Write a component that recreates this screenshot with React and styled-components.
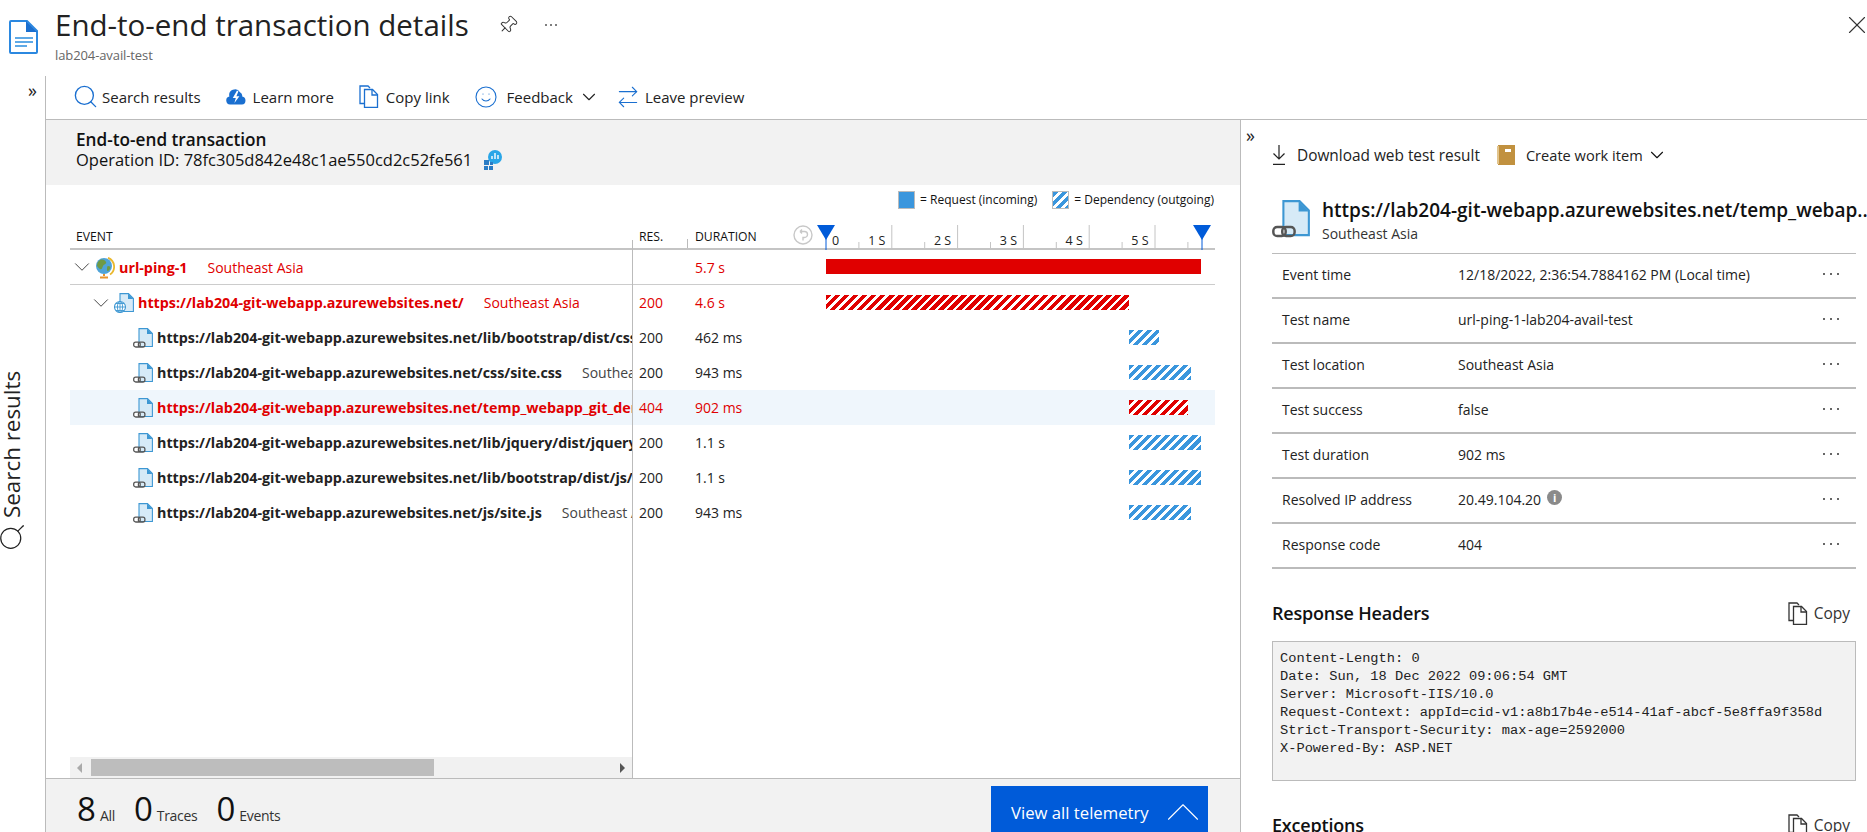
import React from "react";
import styled, { createGlobalStyle } from "styled-components";
import { Search, ChevronDown, ChevronUp, Smile, ArrowRightLeft, Pin, X } from "lucide-react";

const GlobalStyle = createGlobalStyle`
  html, body { margin: 0; padding: 0; height: 100%; background: #fff; overflow: hidden; }
  * { box-sizing: border-box; }
  body { font-family: "Open Sans", "Noto Sans", sans-serif; color: #111; font-size: 14px; }
`;

const PX_PER_SEC = 65.8;
const RED = "#e00000";
const BLUE = "#3a96dd";

const Page = styled.div`
  width: 1867px;
  height: 832px;
  display: flex;
  flex-direction: column;
  overflow: hidden;
`;

const Header = styled.header`
  height: 76px;
  flex: none;
  display: flex;
  padding: 9px 0 0 9px;
  position: relative;
`;

const HeaderIcon = styled.div`
  width: 29px;
  margin: 11px 17px 0 0;
`;

const TitleRow = styled.div`
  display: flex;
  align-items: center;
  height: 32px;
`;

const Title = styled.h1`
  margin: 0;
  font-size: 29.5px;
  line-height: 32px;
  font-weight: 400;
  color: #222;
`;

const Subtitle = styled.div`
  font-size: 13px;
  line-height: 18px;
  color: #666;
  margin-top: 5px;
  letter-spacing: -0.1px;
`;

const PinButton = styled.span`
  display: flex;
  margin-left: 29px;
  color: #333;
  transform: rotate(45deg);
`;

const MoreButton = styled.span`
  display: flex;
  margin-left: 26px;
  color: #555;
`;

const CloseButton = styled.span`
  position: absolute;
  right: -5px;
  top: 10px;
  display: flex;
  color: #333;
`;

const Body = styled.div`
  flex: 1;
  min-height: 0;
  display: flex;
`;

const Rail = styled.aside`
  width: 46px;
  flex: none;
  border-right: 1px solid #bbb;
  display: flex;
  flex-direction: column;
`;

const Expand = styled.span`
  font-size: 18px;
  line-height: 18px;
  color: #222;
  margin: 5px 8px 0 0;
  align-self: flex-end;
`;

const RailLabel = styled.div`
  display: flex;
  align-items: center;
  gap: 4px;
  writing-mode: vertical-rl;
  transform: rotate(180deg);
  font-size: 22.4px;
  line-height: 24px;
  height: 190px;
  width: 24px;
  margin: 263px 0 0 0;
  color: #222;
  white-space: nowrap;
`;

const RailSearch = styled(Search)`
  transform: rotate(90deg);
  flex: none;
`;

const Content = styled.div`
  flex: 1;
  min-width: 0;
  display: flex;
  flex-direction: column;
`;

const Toolbar = styled.nav`
  height: 44px;
  flex: none;
  display: flex;
  align-items: center;
  padding: 0 0 2px 29px;
  border-bottom: 1px solid #bbb;
`;

const ToolItem = styled.span`
  display: flex;
  align-items: center;
  gap: ${(p) => p.$gap || 6}px;
  margin-right: ${(p) => p.$right ?? 25}px;
  font-size: ${(p) => p.$size || 15}px;
  white-space: nowrap;
  color: #222;
`;

const ToolSearch = styled(Search)`
  margin: -3px;
`;

const ToolSmile = styled(Smile)`
  margin: -2px;
`;

const ToolSwap = styled(ArrowRightLeft)`
  margin: -3px;
`;

const Split = styled.div`
  flex: 1;
  min-height: 0;
  display: flex;
`;

const Main = styled.main`
  width: 1194px;
  flex: none;
  display: flex;
  flex-direction: column;
`;

const Summary = styled.section`
  height: 65px;
  flex: none;
  background: #f2f2f2;
  padding: 10px 30px 0;
  line-height: 20px;
`;

const SummaryTitle = styled.div`
  font-weight: 600;
  font-size: 17.2px;
`;

const OperationRow = styled.div`
  display: flex;
  align-items: center;
  gap: 11px;
  font-size: 16.5px;
`;

const Legend = styled.div`
  height: 40px;
  flex: none;
  display: flex;
  align-items: flex-end;
  justify-content: flex-end;
  padding: 0 26px 16px 0;
  font-size: 12px;
  gap: 15px;
`;

const LegendItem = styled.span`
  display: flex;
  align-items: center;
  gap: 5px;
  line-height: 18px;
`;

const hatch = (color) =>
  `repeating-linear-gradient(135deg, ${color} 0 4px, #fff 4px 6.4px)`;

const Swatch = styled.span`
  width: 17px;
  height: 18px;
  border: 1px solid #bbb;
  background: ${(p) => (p.$hatched ? hatch(BLUE) : BLUE)};
`;

const TableArea = styled.div`
  flex: 1;
  min-height: 0;
  margin: 0 25px 0 24px;
  display: flex;
  flex-direction: column;
  position: relative;
`;

const ColumnLine = styled.span`
  position: absolute;
  left: 562px;
  top: 15px;
  bottom: 0;
  width: 1px;
  background: #bbb;
`;

const HeaderRow = styled.div`
  height: 25px;
  flex: none;
  display: flex;
  font-size: 12.2px;
  line-height: 23px;
  border-bottom: 2px solid #c4c4c4;
  position: relative;
`;

const HeadEvent = styled.span`
  width: 562px;
  padding-left: 6px;
`;

const HeadRes = styled.span`
  width: 56px;
  padding-left: 7px;
`;

const HeadDuration = styled.span`
  width: 128px;
  padding: 0 3px 0 7px;
  display: flex;
  justify-content: space-between;
  position: relative;
  &::before {
    content: "";
    position: absolute;
    left: -1px;
    bottom: 0;
    height: 9px;
    width: 1px;
    background: #bbb;
  }
`;

const HelpIcon = styled.svg`
  width: 20px;
  height: 20px;
`;

const Axis = styled.svg`
  flex: 1;
  height: 25px;
  overflow: visible;
`;

const Rows = styled.div`
  flex: 1;
  min-height: 0;
`;

const Row = styled.div`
  height: 35px;
  display: flex;
  align-items: center;
  background: ${(p) => (p.$selected ? "#eff6fc" : "transparent")};
  border-bottom: ${(p) => (p.$ruled ? "1px solid #ccc" : "none")};
  color: ${(p) => (p.$error ? RED : "#222")};
`;

const EventCell = styled.div`
  width: 562px;
  flex: none;
  display: flex;
  align-items: center;
  overflow: hidden;
  white-space: nowrap;
  padding-left: ${(p) => 6 + p.$level * 19}px;
`;

const Twisty = styled.span`
  width: 19px;
  flex: none;
  display: flex;
  color: #444;
`;

const TwistyChevron = styled(ChevronDown)`
  flex: none;
  margin: 0 -7px;
`;

const RowIcon = styled.span`
  width: 20px;
  height: 20px;
  flex: none;
  margin-right: 4px;
  display: flex;
`;

const EventName = styled.span`
  font-weight: 700;
  font-size: 14.3px;
  flex: none;
`;

const Location = styled.span`
  margin-left: 20px;
  flex: none;
  font-size: 14px;
  color: ${(p) => (p.$error ? RED : "#444")};
`;

const ResCell = styled.span`
  width: 56px;
  flex: none;
  padding-left: 7px;
`;

const DurationCell = styled.span`
  width: 138px;
  flex: none;
  padding-left: 7px;
`;

const Track = styled.div`
  flex: 1;
  height: 15px;
  margin-top: -1px;
`;

const Bar = styled.div`
  height: 15px;
  background: ${(p) => {
    const color = p.$error ? RED : BLUE;
    return p.$hatched ? hatch(color) : color;
  }};
`;

const ScrollBar = styled.div`
  height: 21px;
  flex: none;
  width: 562px;
  background: #f1f1f1;
  display: flex;
  align-items: center;
  justify-content: space-between;
  padding: 0 7px;
  position: relative;
`;

const ScrollThumb = styled.span`
  position: absolute;
  left: 21px;
  top: 2px;
  width: 343px;
  height: 17px;
  background: #bdbdbd;
`;

const Arrow = styled.span`
  width: 0;
  height: 0;
  border-top: 5px solid transparent;
  border-bottom: 5px solid transparent;
  ${(p) => (p.$left ? "border-right: 5px solid #aaa;" : "border-left: 5px solid #555;")}
`;

const Footer = styled.footer`
  height: 54px;
  flex: none;
  overflow: hidden;
  border-top: 1px solid #bbb;
  background: #f2f2f2;
  display: flex;
  justify-content: space-between;
  padding: 7px 32px 0 31px;
`;

const Stats = styled.div`
  display: flex;
  gap: 19px;
  align-items: baseline;
  padding-top: 2px;
`;

const Stat = styled.span`
  display: flex;
  align-items: baseline;
  gap: 4px;
  font-size: 14px;
  letter-spacing: -0.3px;
  color: #333;
  b {
    font-weight: 400;
    font-size: 33px;
    line-height: 42px;
    letter-spacing: 0;
    color: #111;
  }
`;

const ViewAll = styled.button`
  width: 217px;
  height: 52px;
  flex: none;
  border: none;
  background: #005bd9;
  color: #fff;
  font: inherit;
  font-size: 16.7px;
  display: flex;
  align-items: center;
  justify-content: space-between;
  padding: 0 0 0 20px;
`;

const ViewAllChevron = styled(ChevronUp)`
  flex: none;
  margin-right: -4px;
`;

const Panel = styled.aside`
  flex: 1;
  min-width: 0;
  border-left: 1px solid #bbb;
  padding: 0 11px 0 31px;
  position: relative;
  overflow: hidden;
`;

const PanelExpand = styled.span`
  position: absolute;
  left: 5px;
  top: 6px;
  font-size: 18px;
  line-height: 18px;
  color: #222;
`;

const PanelActions = styled.div`
  display: flex;
  align-items: center;
  height: 40px;
  margin-top: 15px;
`;

const ResultHead = styled.div`
  display: flex;
  gap: 12px;
  margin-top: 25px;
  height: 54px;
  border-bottom: 1px solid #bbb;
`;

const ResultIcon = styled.span`
  width: 38px;
  flex: none;
`;

const ResultText = styled.div`
  min-width: 0;
`;

const ResultTitle = styled.div`
  font-size: 19px;
  font-weight: 600;
  line-height: 24px;
  white-space: nowrap;
  margin-top: -2px;
`;

const ResultSub = styled.div`
  font-size: 14px;
  line-height: 20px;
  margin-top: 2px;
  color: #333;
`;

const InfoRow = styled.div`
  height: 45px;
  display: grid;
  grid-template-columns: 176px 1fr auto;
  align-items: center;
  padding: 0 16px 3px 10px;
  border-bottom: 2px solid #bbb;
  font-size: 14px;
  color: #222;
`;

const InfoValue = styled.span`
  display: flex;
  align-items: center;
  gap: 6px;
`;

const InfoDot = styled.span`
  width: 15px;
  height: 15px;
  border-radius: 50%;
  background: #8a8a8a;
  color: #fff;
  font-size: 11px;
  font-weight: 700;
  line-height: 15px;
  text-align: center;
  margin-top: -4px;
`;

const SectionHead = styled.div`
  display: flex;
  align-items: center;
  justify-content: space-between;
  height: 30px;
  margin-top: 29px;
`;

const SectionTitle = styled.h2`
  margin: 0;
  font-size: 18px;
  font-weight: 600;
  letter-spacing: -0.2px;
`;

const CopyLink = styled.span`
  display: flex;
  align-items: center;
  gap: 6px;
  padding-right: 6px;
  font-size: 15.5px;
  color: #333;
`;

const CodeBox = styled.pre`
  margin: 13px 0 0;
  height: 140px;
  background: #f2f2f2;
  border: 1px solid #bbb;
  padding: 8px 7px;
  font-family: "Liberation Mono", monospace;
  font-size: 13.7px;
  line-height: 18px;
  color: #222;
  overflow: hidden;
`;

const Dots = ({ color = "#333", step = 7 }) => (
  <svg width={step * 2 + 4} height="4" viewBox={`0 0 ${step * 2 + 4} 4`}>
    <circle cx="2" cy="2" r="1" fill={color} />
    <circle cx={2 + step} cy="2" r="1" fill={color} />
    <circle cx={2 + step * 2} cy="2" r="1" fill={color} />
  </svg>
);

const DocIcon = () => (
  <svg width="29" height="34" viewBox="0 0 29 34">
    <path d="M1 2a1 1 0 0 1 1-1h16l10 10v21a1 1 0 0 1-1 1H2a1 1 0 0 1-1-1z" fill="#fff" stroke="#2b88e0" strokeWidth="2" />
    <path d="M17 1l11 11H17z" fill="#1a6fd0" />
    <path d="M6 18h18M6 22h18M6 26h12" stroke="#5ea9e6" strokeWidth="2" />
  </svg>
);

const CloudIcon = () => (
  <svg width="20" height="16" viewBox="0 0 20 16">
    <path d="M4 15.5a4 4 0 0 1-.6-7.9A5.8 5.8 0 0 1 14 3.2a4.2 4.2 0 0 1 2.2 4.4A4 4 0 0 1 16 15.5z" fill="#1a6fd0" />
    <path d="M11 1.5L6.8 9h3L8.4 14l5-6.8h-3l2-5z" fill="#fff" />
  </svg>
);

const CopyIcon = ({ color }) => (
  <svg width="20" height="23" viewBox="0 0 20 23" fill="none" stroke={color} strokeWidth="1.3">
    <path d="M5.5 18.5H1V1h8l2 2" />
    <path d="M5.5 4.5h8l5 5v13h-13z" />
    <path d="M13 4.5v5.5h5.5" />
  </svg>
);

const InsightIcon = () => (
  <svg width="20" height="20" viewBox="0 0 20 20">
    <circle cx="12" cy="7" r="7" fill="#29a6e8" />
    <path d="M9 9V6M12 9V3M15 9V5" stroke="#fff" strokeWidth="1.4" />
    <path d="M1 10h5v5H1zM7 12h3v3H7zM1 16h4v4H1zM6 16h4v4H6z" fill="#2b7cc4" />
  </svg>
);

const GlobeIcon = () => (
  <svg width="20" height="22" viewBox="0 0 20 22">
    <path d="M13 .8a9.5 9.5 0 0 1 2 16.7" fill="none" stroke="#eab82e" strokeWidth="1.8" />
    <circle cx="9" cy="9" r="8" fill="#4fa3d8" />
    <path d="M5 3c3-1 5 0 6 2s-2 2-3 4-1 4-3 3-3-3-3-4 1-4 3-5zM13 9c2 0 3 1 2 3s-3 3-3 1 0-4 1-4z" fill="#6f9a45" />
    <path d="M9 17v2M5 20.5h8" stroke="#e8942c" strokeWidth="2" />
  </svg>
);

const FileLink = ({ scale = 1 }) => (
  <svg width={20 * scale} height={20 * scale} viewBox="0 0 20 20">
    <path d="M6 .6h8.5L19.4 5.5v13H6z" fill="#d6eaf7" stroke="#3d97d3" strokeWidth="1.1" />
    <path d="M14 .6l5.4 5.4H14z" fill="#3d97d3" />
    <rect x="0.7" y="14.2" width="6.5" height="4.8" rx="2" fill="#fff" stroke="#555" strokeWidth="1.3" />
    <rect x="5.4" y="14.2" width="6.5" height="4.8" rx="2" fill="none" stroke="#555" strokeWidth="1.3" />
  </svg>
);

const FileGlobe = () => (
  <svg width="20" height="20" viewBox="0 0 20 20">
    <path d="M6 .6h8.5L19.4 5.5v13H6z" fill="#d6eaf7" stroke="#3d97d3" strokeWidth="1.1" />
    <path d="M14 .6l5.4 5.4H14z" fill="#3d97d3" />
    <circle cx="6" cy="14" r="5.5" fill="#fff" stroke="#3d97d3" strokeWidth="1.1" />
    <path d="M.5 14h11M6 8.5v11M2 10.5h8M2 17.5h8" stroke="#3d97d3" strokeWidth="0.9" />
    <ellipse cx="6" cy="14" rx="2.6" ry="5.5" fill="none" stroke="#3d97d3" strokeWidth="0.9" />
  </svg>
);

const BookIcon = () => (
  <svg width="18" height="20" viewBox="0 0 18 20">
    <rect x="1" y="0" width="17" height="20" fill="#c1913f" />
    <rect x="0" y="1" width="2" height="18" fill="#e2c48c" />
    <rect x="8" y="4" width="6" height="3" fill="#fff" />
  </svg>
);

const DownloadIcon = () => (
  <svg width="14" height="20" viewBox="0 0 14 20" fill="none" stroke="#222" strokeWidth="1.2">
    <path d="M7 0v14M1.5 8.5L7 14l5.5-5.5M1 19.4h12" />
  </svg>
);

const AXIS_ZERO = 10;
const ticks = Array.from({ length: 12 }, (_, i) => i * 0.5);

const TimeAxis = () => (
  <Axis viewBox="0 0 399 25" preserveAspectRatio="xMinYMin">
    {ticks.map((t) => {
      const major = t % 1 === 0;
      const x = AXIS_ZERO + t * PX_PER_SEC;
      return t === 0 ? null : (
        <line key={t} x1={x} x2={x} y1={major ? 0 : 17} y2={25} stroke="#c4c4c4" strokeWidth="1" />
      );
    })}
    <text x={16} y={20} fontSize="12.5" fill="#222">0</text>
    {[1, 2, 3, 4, 5].map((n) => (
      <text key={n} x={AXIS_ZERO + n * PX_PER_SEC - 15} y={20} fontSize="12.5" textAnchor="middle" fill="#222">
        {n} S
      </text>
    ))}
    <path d="M1 0h18l-9 15z" fill="#005bd9" />
    <path d="M10 10v15" stroke="#005bd9" strokeWidth="1" />
    <path d="M377 0h18l-9 15z" fill="#005bd9" />
    <path d="M386 10v15" stroke="#005bd9" strokeWidth="1" />
  </Axis>
);

const rows = [
  { level: 0, twisty: true, icon: <GlobeIcon />, name: "url-ping-1", location: "Southeast Asia", res: "", duration: "5.7 s", start: 0, secs: 5.7, error: true, solid: true, ruled: true },
  { level: 1, twisty: true, icon: <FileGlobe />, name: "https://lab204-git-webapp.azurewebsites.net/", location: "Southeast Asia", res: "200", duration: "4.6 s", start: 0, secs: 4.6, error: true },
  { level: 2, icon: <FileLink />, name: "https://lab204-git-webapp.azurewebsites.net/lib/bootstrap/dist/css/bootstrap.min.css", location: "Southeast Asia", res: "200", duration: "462 ms", start: 4.6, secs: 0.462 },
  { level: 2, icon: <FileLink />, name: "https://lab204-git-webapp.azurewebsites.net/css/site.css", location: "Southeast Asia", res: "200", duration: "943 ms", start: 4.6, secs: 0.943 },
  { level: 2, icon: <FileLink />, name: "https://lab204-git-webapp.azurewebsites.net/temp_webapp_git_demo.html", location: "Southeast Asia", res: "404", duration: "902 ms", start: 4.6, secs: 0.902, error: true, selected: true },
  { level: 2, icon: <FileLink />, name: "https://lab204-git-webapp.azurewebsites.net/lib/jquery/dist/jquery.min.js", location: "Southeast Asia", res: "200", duration: "1.1 s", start: 4.6, secs: 1.1 },
  { level: 2, icon: <FileLink />, name: "https://lab204-git-webapp.azurewebsites.net/lib/bootstrap/dist/js/bootstrap.min.js", location: "Southeast Asia", res: "200", duration: "1.1 s", start: 4.6, secs: 1.1 },
  { level: 2, icon: <FileLink />, name: "https://lab204-git-webapp.azurewebsites.net/js/site.js", location: "Southeast Asia", res: "200", duration: "943 ms", start: 4.6, secs: 0.943 },
];

const details = [
  ["Event time", "12/18/2022, 2:36:54.7884162 PM (Local time)"],
  ["Test name", "url-ping-1-lab204-avail-test"],
  ["Test location", "Southeast Asia"],
  ["Test success", "false"],
  ["Test duration", "902 ms"],
  ["Resolved IP address", "20.49.104.20", true],
  ["Response code", "404"],
];

const headers = `Content-Length: 0
Date: Sun, 18 Dec 2022 09:06:54 GMT
Server: Microsoft-IIS/10.0
Request-Context: appId=cid-v1:a8b17b4e-e514-41af-abcf-5e8ffa9f358d
Strict-Transport-Security: max-age=2592000
X-Powered-By: ASP.NET`;

export default function App() {
  return (
    <Page>
      <GlobalStyle />
      <Header>
        <HeaderIcon><DocIcon /></HeaderIcon>
        <div>
          <TitleRow>
            <Title>End-to-end transaction details</Title>
            <PinButton><Pin size={20} strokeWidth={1.2} /></PinButton>
            <MoreButton><Dots color="#555" step={5} /></MoreButton>
          </TitleRow>
          <Subtitle>lab204-avail-test</Subtitle>
        </div>
        <CloseButton><X size={30} strokeWidth={0.9} /></CloseButton>
      </Header>
      <Body>
        <Rail>
          <Expand>»</Expand>
          <RailLabel>
            <RailSearch size={30} strokeWidth={1} />
            Search results
          </RailLabel>
        </Rail>
        <Content>
          <Toolbar>
            <ToolItem $right={25}><ToolSearch size={27} color="#1a6fd0" strokeWidth={1.2} />Search results</ToolItem>
            <ToolItem $gap={7} $right={25}><CloudIcon />Learn more</ToolItem>
            <ToolItem $gap={7} $right={26}><CopyIcon color="#1a6fd0" />Copy link</ToolItem>
            <ToolItem $gap={11} $right={5}><ToolSmile size={24} color="#1a6fd0" strokeWidth={1.1} />Feedback</ToolItem>
            <ToolItem $right={18}><ChevronDown size={22} strokeWidth={1.2} /></ToolItem>
            <ToolItem $gap={7}><ToolSwap size={26} color="#1a6fd0" strokeWidth={1} />Leave preview</ToolItem>
          </Toolbar>
          <Split>
            <Main>
              <Summary>
                <SummaryTitle>End-to-end transaction</SummaryTitle>
                <OperationRow>
                  Operation ID: 78fc305d842e48c1ae550cd2c52fe561
                  <InsightIcon />
                </OperationRow>
              </Summary>
              <Legend>
                <LegendItem><Swatch />= Request (incoming)</LegendItem>
                <LegendItem><Swatch $hatched />= Dependency (outgoing)</LegendItem>
              </Legend>
              <TableArea>
                <HeaderRow>
                  <HeadEvent>EVENT</HeadEvent>
                  <HeadRes>RES.</HeadRes>
                  <HeadDuration>
                    DURATION
                    <HelpIcon viewBox="0 0 20 20" fill="none" stroke="#c8c8c8" strokeWidth="1.4">
                      <circle cx="10" cy="10" r="9" />
                      <path d="M7 6.5h4.5a3 3 0 0 1 0 6H10v3M7 6.5l2-2M7 6.5l2 2" />
                    </HelpIcon>
                  </HeadDuration>
                  <TimeAxis />
                </HeaderRow>
                <Rows>
                  {rows.map((row) => (
                    <Row key={row.name} $error={row.error} $selected={row.selected} $ruled={row.ruled}>
                      <EventCell $level={row.level}>
                        <Twisty>{row.twisty && <TwistyChevron size={26} strokeWidth={0.9} />}</Twisty>
                        <RowIcon>{row.icon}</RowIcon>
                        <EventName>{row.name}</EventName>
                        <Location $error={row.error}>{row.location}</Location>
                      </EventCell>
                      <ResCell>{row.res}</ResCell>
                      <DurationCell>{row.duration}</DurationCell>
                      <Track>
                        <Bar
                          $error={row.error}
                          $hatched={!row.solid}
                          style={{ marginLeft: row.start * PX_PER_SEC, width: row.secs * PX_PER_SEC }}
                        />
                      </Track>
                    </Row>
                  ))}
                </Rows>
                <ScrollBar>
                  <Arrow $left />
                  <ScrollThumb />
                  <Arrow />
                </ScrollBar>
                <ColumnLine />
              </TableArea>
              <Footer>
                <Stats>
                  <Stat><b>8</b>All</Stat>
                  <Stat><b>0</b>Traces</Stat>
                  <Stat><b>0</b>Events</Stat>
                </Stats>
                <ViewAll>
                  View all telemetry
                  <ViewAllChevron size={58} strokeWidth={0.45} />
                </ViewAll>
              </Footer>
            </Main>
            <Panel>
              <PanelExpand>»</PanelExpand>
              <PanelActions>
                <ToolItem $gap={11} $right={17} $size={15.4}><DownloadIcon />Download web test result</ToolItem>
                <ToolItem $gap={11} $right={3} $size={14.6}><BookIcon />Create work item</ToolItem>
                <ChevronDown size={22} strokeWidth={1.2} />
              </PanelActions>
              <ResultHead>
                <ResultIcon><FileLink scale={1.9} /></ResultIcon>
                <ResultText>
                  <ResultTitle>https://lab204-git-webapp.azurewebsites.net/temp_webap..</ResultTitle>
                  <ResultSub>Southeast Asia</ResultSub>
                </ResultText>
              </ResultHead>
              {details.map(([label, value, info]) => (
                <InfoRow key={label}>
                  <span>{label}</span>
                  <InfoValue>{value}{info && <InfoDot>i</InfoDot>}</InfoValue>
                  <Dots />
                </InfoRow>
              ))}
              <SectionHead>
                <SectionTitle>Response Headers</SectionTitle>
                <CopyLink><CopyIcon color="#333" />Copy</CopyLink>
              </SectionHead>
              <CodeBox>{headers}</CodeBox>
              <SectionHead>
                <SectionTitle>Exceptions</SectionTitle>
                <CopyLink><CopyIcon color="#333" />Copy</CopyLink>
              </SectionHead>
            </Panel>
          </Split>
        </Content>
      </Body>
    </Page>
  );
}
